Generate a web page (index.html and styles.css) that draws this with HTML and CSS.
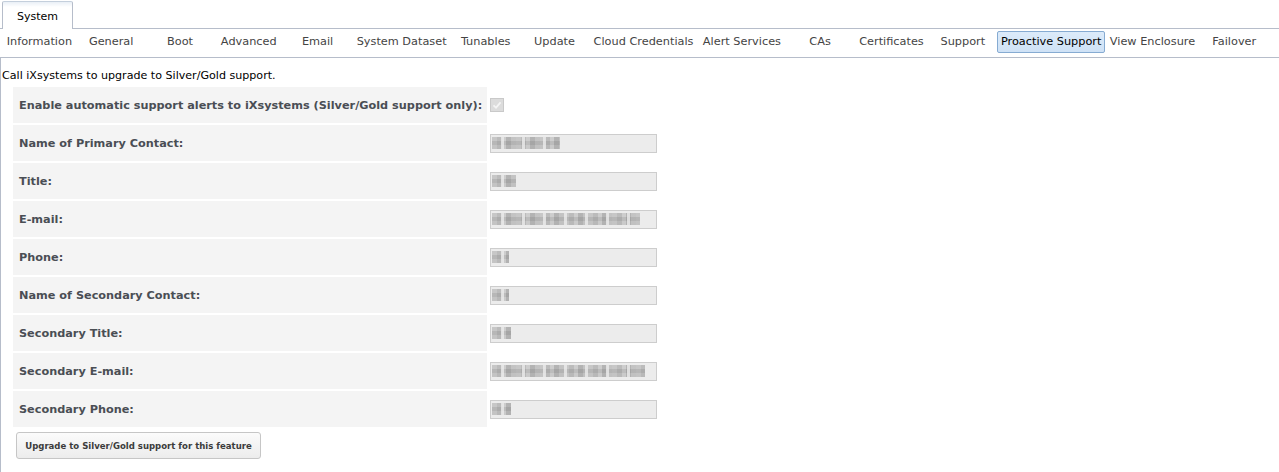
FILE: index.html
```html
<!DOCTYPE html>
<html lang="en">
<head>
<meta charset="utf-8">
<title>System - Proactive Support</title>
<link rel="stylesheet" href="styles.css">
</head>
<body>
<div class="tabbar">
  <div class="tab">System</div>
</div>
<div class="subtabs">
  <span class="sub">Information</span>
  <span class="sub">General</span>
  <span class="sub">Boot</span>
  <span class="sub">Advanced</span>
  <span class="sub">Email</span>
  <span class="sub">System Dataset</span>
  <span class="sub">Tunables</span>
  <span class="sub">Update</span>
  <span class="sub">Cloud Credentials</span>
  <span class="sub">Alert Services</span>
  <span class="sub">CAs</span>
  <span class="sub">Certificates</span>
  <span class="sub">Support</span>
  <span class="sub active">Proactive Support</span>
  <span class="sub">View Enclosure</span>
  <span class="sub">Failover</span>
</div>
<div class="pane">
  <p class="notice">Call iXsystems to upgrade to Silver/Gold support.</p>
  <table class="form">
    <tr>
      <td class="label">Enable automatic support alerts to iXsystems (Silver/Gold support only):</td>
      <td class="field"><span class="check"><svg width="12" height="12" viewBox="0 0 12 12"><path d="M2.5 6.3 L5 8.6 L9.6 3.4" fill="none" stroke="#f4f4f4" stroke-width="1.8"/></svg></span></td>
    </tr>
    <tr>
      <td class="label">Name of Primary Contact:</td>
      <td class="field"><span class="input"><span class="mosaic" style="width:68px"></span></span></td>
    </tr>
    <tr>
      <td class="label">Title:</td>
      <td class="field"><span class="input"><span class="mosaic" style="width:24px"></span></span></td>
    </tr>
    <tr>
      <td class="label">E-mail:</td>
      <td class="field"><span class="input"><span class="mosaic" style="width:148px"></span></span></td>
    </tr>
    <tr>
      <td class="label">Phone:</td>
      <td class="field"><span class="input"><span class="mosaic" style="width:17px"></span></span></td>
    </tr>
    <tr>
      <td class="label">Name of Secondary Contact:</td>
      <td class="field"><span class="input"><span class="mosaic" style="width:17px"></span></span></td>
    </tr>
    <tr>
      <td class="label">Secondary Title:</td>
      <td class="field"><span class="input"><span class="mosaic" style="width:19px"></span></span></td>
    </tr>
    <tr>
      <td class="label">Secondary E-mail:</td>
      <td class="field"><span class="input"><span class="mosaic" style="width:153px"></span></span></td>
    </tr>
    <tr>
      <td class="label">Secondary Phone:</td>
      <td class="field"><span class="input"><span class="mosaic" style="width:19px"></span></span></td>
    </tr>
  </table>
  <button class="upgrade" type="button">Upgrade to Silver/Gold support for this feature</button>
</div>
</body>
</html>
```

FILE: styles.css
```css
html, body {
  margin: 0;
  padding: 0;
  background: #fff;
}
body {
  font-family: "DejaVu Sans", Verdana, sans-serif;
  font-size: 11px;
  color: #000;
  height: 472px;
  display: flex;
  flex-direction: column;
}
.tabbar {
  display: flex;
  align-items: flex-end;
  height: 28px;
  padding-left: 2px;
  border-bottom: 1px solid #b6bdca;
}
.tab {
  box-sizing: border-box;
  height: 28px;
  margin-bottom: -1px;
  padding: 2px 14px 0 14px;
  border: 1px solid #b6bdca;
  border-top-color: #c4cfdc;
  border-bottom: none;
  border-radius: 2px 2px 0 0;
  background: linear-gradient(#e9eff6 0, #ffffff 5px, #ffffff 100%);
  display: flex;
  align-items: center;
  color: #000;
  font-size: 11px;
}
.subtabs {
  display: flex;
  align-items: flex-start;
  height: 29px;
  box-sizing: border-box;
  padding: 2px 0 0 2px;
  border-bottom: 1px solid #b6bdca;
}
.sub {
  box-sizing: border-box;
  min-width: 68.8px;
  padding: 3px 3.7px 4px 3.7px;
  line-height: 13px;
  font-size: 11.3px;
  border: 1px solid transparent;
  border-radius: 2px;
  text-align: center;
  color: #444;
  white-space: nowrap;
}
.sub.active {
  color: #000;
  padding: 3px 2.7px 4px 2.7px;
  background: linear-gradient(#dcebfa, #cfe2f6);
  border-color: #86abd2;
}
.pane {
  flex: 1;
  border-left: 1px solid #b6bdca;
  padding-left: 1px;
}
.notice {
  margin: 11px 0 3px 0;
  line-height: 13px;
  font-size: 11.1px;
}
.form {
  border-spacing: 2px;
  margin-left: 9px;
}
.label {
  height: 36px;
  box-sizing: border-box;
  padding: 0 5px 0 6px;
  background: #f4f4f4;
  font-weight: bold;
  font-size: 11.27px;
  color: #4a4e54;
  white-space: nowrap;
}
.field {
  padding: 0 0 0 1px;
  vertical-align: middle;
}
.check {
  display: block;
  box-sizing: border-box;
  width: 14px;
  height: 14px;
  border: 1px solid #c9c9c9;
  background: #dcdcdc;
}
.check svg {
  display: block;
}
.input {
  display: flex;
  align-items: center;
  box-sizing: border-box;
  width: 167px;
  height: 19px;
  border: 1px solid #cdcdcd;
  background: #ececec;
  padding-left: 1px;
}
.mosaic {
  display: block;
  height: 12px;
  background:
    repeating-linear-gradient(90deg, rgba(236,236,236,0) 0 9px, rgba(236,236,236,0.8) 9px 12px, rgba(236,236,236,0) 12px 21px),
    linear-gradient(#e6e6e6 0 4px, #cfcfcf 4px 8px, #e2e2e2 8px 12px),
    repeating-linear-gradient(90deg, #d6d6d6 0 5px, #c7c7c7 5px 10px, #dedede 10px 14px, #bdbdbd 14px 19px, #d2d2d2 19px 24px);
  background-blend-mode: normal, multiply, normal;
  opacity: 0.85;
}
.upgrade {
  display: block;
  margin: 3px 0 0 14px;
  width: 245px;
  height: 27px;
  box-sizing: border-box;
  padding: 0;
  border: 1px solid #c6c6c6;
  border-radius: 3px;
  background: linear-gradient(#fbfbfb, #ececec);
  font-family: "DejaVu Sans Condensed", "DejaVu Sans", sans-serif;
  font-stretch: condensed;
  font-weight: bold;
  font-size: 9.5px;
  color: #3c3c3c;
}
```
